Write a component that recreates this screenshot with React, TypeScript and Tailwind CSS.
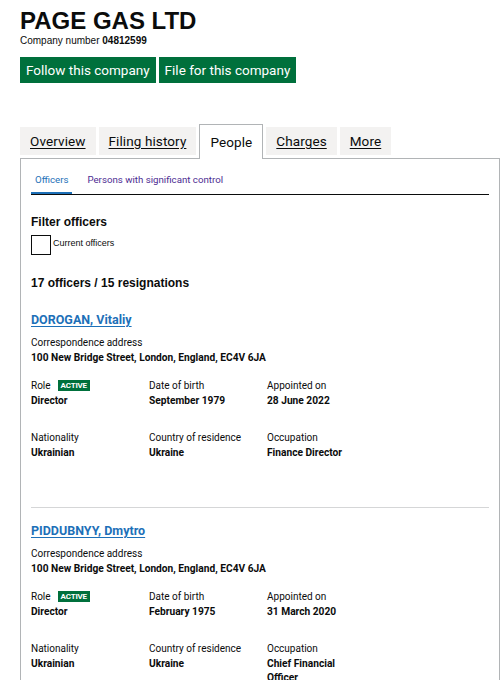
const body = "font-['Roboto',sans-serif]";
const arial = "font-['Liberation_Sans',Arial,sans-serif]";

interface Officer {
  name: string;
  address: string;
  role: string;
  dob: string;
  appointed: string;
  nationality: string;
  residence: string;
  occupation: string;
}

const officers: Officer[] = [
  {
    name: "DOROGAN, Vitaliy",
    address: "100 New Bridge Street, London, England, EC4V 6JA",
    role: "Director",
    dob: "September 1979",
    appointed: "28 June 2022",
    nationality: "Ukrainian",
    residence: "Ukraine",
    occupation: "Finance Director",
  },
  {
    name: "PIDDUBNYY, Dmytro",
    address: "100 New Bridge Street, London, England, EC4V 6JA",
    role: "Director",
    dob: "February 1975",
    appointed: "31 March 2020",
    nationality: "Ukrainian",
    residence: "Ukraine",
    occupation: "Chief Financial Officer",
  },
];

const tabs = ["Overview", "Filing history", "People", "Charges", "More"];

const Field = ({ label, value, badge }: { label: string; value: string; badge?: boolean }) => (
  <div className="w-[118px] pr-[14px]">
    <div className="flex items-center gap-[7px] text-[10px] leading-[15px]">
      <span>{label}</span>
      {badge && (
        <span className="bg-[#00703c] px-[3px] text-[8px] font-bold leading-[11px] tracking-[-0.2px] text-white">
          ACTIVE
        </span>
      )}
    </div>
    <div className="max-w-[90px] pt-px text-[10.2px] font-bold leading-[14px]">{value}</div>
  </div>
);

const OfficerCard = ({ officer }: { officer: Officer }) => (
  <div>
    <div className="text-[12.5px] leading-[16px]">
      <a href="#" className="font-bold text-[#1d70b8] underline underline-offset-2">
        {officer.name}
      </a>
    </div>
    <div className="mt-[7px] text-[10px] leading-[15px]">Correspondence address</div>
    <div className="pt-px text-[10.2px] font-bold leading-[14px]">{officer.address}</div>
    <div className="mt-[13px] flex">
      <Field label="Role" value={officer.role} badge />
      <Field label="Date of birth" value={officer.dob} />
      <Field label="Appointed on" value={officer.appointed} />
    </div>
    <div className="mt-[22px] flex">
      <Field label="Nationality" value={officer.nationality} />
      <Field label="Country of residence" value={officer.residence} />
      <Field label="Occupation" value={officer.occupation} />
    </div>
  </div>
);

export default function App() {
  return (
    <div className={`min-h-[680px] w-[504px] overflow-hidden bg-white px-5 pt-[7px] text-[#0b0c0c] ${body}`}>
      <h1 className={`${arial} text-[24px] font-bold leading-[28px]`}>PAGE GAS LTD</h1>
      <p className={`${arial} text-[10px] leading-[12px]`}>
        Company number <strong>04812599</strong>
      </p>

      <div className="mt-[10px] flex gap-[3px]">
        <button className="h-[26px] bg-[#00703c] px-[6px] text-[13.5px] text-white">Follow this company</button>
        <button className="h-[26px] bg-[#00703c] px-[6px] text-[13.5px] text-white">File for this company</button>
      </div>

      <ul className="mt-[41px] flex items-end gap-[3px]">
        {tabs.map((tab) =>
          tab === "People" ? (
            <li
              key={tab}
              className="relative z-10 -mb-px flex h-[35px] items-center border border-b-0 border-[#b1b4b6] bg-white px-[10px] text-[13.5px] tracking-[0.1px]"
            >
              {tab}
            </li>
          ) : (
            <li
              key={tab}
              className="mb-[3px] flex h-[28px] items-center bg-[#f3f2f1] px-[10px] text-[13.5px] tracking-[0.1px]"
            >
              <a href="#" className="underline underline-offset-2">
                {tab}
              </a>
            </li>
          )
        )}
      </ul>

      <div className="w-[480px] border border-[#b1b4b6] px-[10px] pb-10">
        <div className="flex gap-[15px] border-b border-[#0b0c0c]">
          <a href="#" className="border-b-2 border-[#1d70b8] px-[4px] pt-[14px] pb-[5px] text-[9.7px] leading-[14px] text-[#1d70b8]">
            Officers
          </a>
          <a href="#" className="pt-[14px] pb-[7px] text-[9.7px] leading-[14px] text-[#4c2c92]">
            Persons with significant control
          </a>
        </div>

        <h2 className={`${arial} mt-[20px] text-[12px] font-bold leading-[14px]`}>Filter officers</h2>
        <label className={`${arial} mt-[6px] flex items-start gap-[2px] text-[9px]`}>
          <span className="h-[20px] w-[20px] border border-[#0b0c0c]" />
          <span className="mt-[2px] leading-[12px]">Current officers</span>
        </label>

        <h2 className={`${arial} mt-[21px] text-[12px] font-bold leading-[14px]`}>17 officers / 15 resignations</h2>

        <div className="mt-[22px]">
          {officers.map((officer, index) => (
            <div key={index}>
              {index > 0 && <hr className="mt-[47px] mb-[15px] border-[#d5d6d7]" />}
              <OfficerCard officer={officer} />
            </div>
          ))}
        </div>
      </div>
    </div>
  );
}
